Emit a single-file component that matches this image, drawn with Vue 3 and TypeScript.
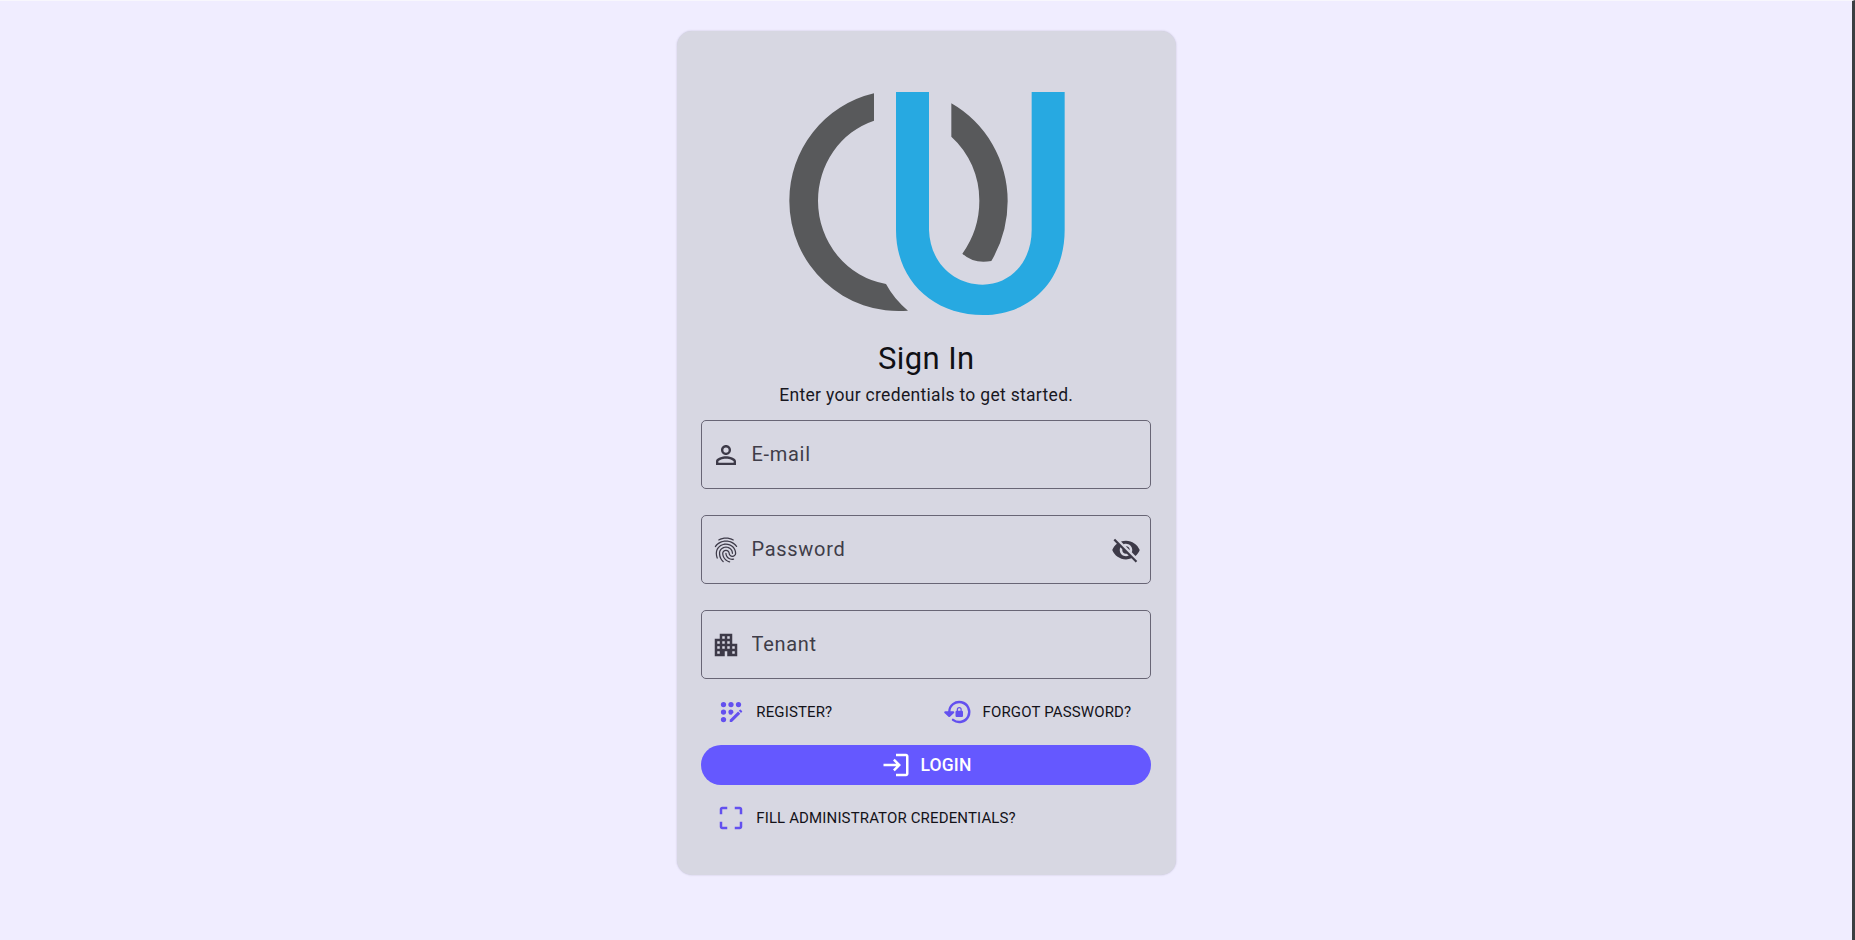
<script setup lang="ts">
import { ref } from 'vue'

interface Field {
  id: string
  label: string
  icon: string
  toggle?: boolean
}

const fields: Field[] = [
  {
    id: 'email',
    label: 'E-mail',
    icon: 'M12 5.9a2.1 2.1 0 1 1 0 4.2 2.1 2.1 0 0 1 0-4.2m0 9c2.97 0 6.1 1.46 6.1 2.1v1.1H5.9V17c0-.64 3.13-2.1 6.1-2.1M12 4C9.79 4 8 5.79 8 8s1.79 4 4 4 4-1.79 4-4-1.79-4-4-4zm0 9c-2.67 0-8 1.34-8 4v3h16v-3c0-2.66-5.33-4-8-4z',
  },
  {
    id: 'password',
    label: 'Password',
    toggle: true,
    icon: 'M17.81 4.47c-.08 0-.16-.02-.23-.06C15.66 3.42 14 3 12.01 3c-1.98 0-3.86.47-5.57 1.41-.24.13-.54.04-.68-.2-.13-.24-.04-.55.2-.68C7.82 2.52 9.86 2 12.01 2c2.13 0 3.99.47 6.03 1.52.25.13.34.43.21.67-.09.18-.26.28-.44.28zM3.5 9.72c-.1 0-.2-.03-.29-.09-.23-.16-.28-.47-.12-.7.99-1.4 2.25-2.5 3.75-3.27C9.98 4.04 14 4.03 17.15 5.65c1.5.77 2.76 1.86 3.75 3.25.16.22.11.54-.12.7-.23.16-.54.11-.7-.12-.9-1.26-2.04-2.25-3.39-2.94-2.87-1.47-6.54-1.47-9.4.01-1.36.7-2.5 1.7-3.4 2.96-.08.14-.23.21-.39.21zm6.25 12.07c-.13 0-.26-.05-.35-.15-.87-.87-1.34-1.43-2.01-2.64-.69-1.23-1.05-2.73-1.05-4.34 0-2.97 2.54-5.39 5.66-5.39s5.66 2.42 5.66 5.39c0 .28-.22.5-.5.5s-.5-.22-.5-.5c0-2.42-2.09-4.39-4.66-4.39-2.57 0-4.66 1.97-4.66 4.39 0 1.44.32 2.77.93 3.85.64 1.15 1.08 1.64 1.85 2.42.19.2.19.51 0 .71-.11.1-.24.15-.37.15zm7.17-1.85c-1.19 0-2.24-.3-3.1-.89-1.49-1.01-2.38-2.65-2.38-4.39 0-.28.22-.5.5-.5s.5.22.5.5c0 1.41.72 2.74 1.94 3.56.71.48 1.54.71 2.54.71.24 0 .64-.03 1.04-.1.27-.05.53.13.58.41.05.27-.13.53-.41.58-.57.11-1.07.12-1.21.12zM14.91 22c-.04 0-.09-.01-.13-.02-1.59-.44-2.63-1.03-3.72-2.1-1.4-1.39-2.17-3.24-2.17-5.22 0-1.62 1.38-2.94 3.08-2.94 1.7 0 3.08 1.32 3.08 2.94 0 1.07.93 1.94 2.08 1.94s2.08-.87 2.08-1.94c0-3.77-3.25-6.83-7.25-6.83-2.84 0-5.44 1.58-6.61 4.03-.39.81-.59 1.76-.59 2.8 0 .78.07 2.01.67 3.61.1.26-.03.55-.29.64-.26.1-.55-.04-.64-.29-.49-1.31-.73-2.61-.73-3.96 0-1.2.23-2.29.68-3.24 1.33-2.79 4.28-4.6 7.51-4.6 4.55 0 8.25 3.51 8.25 7.83 0 1.62-1.38 2.94-3.08 2.94s-3.08-1.32-3.08-2.94c0-1.07-.93-1.94-2.08-1.94s-2.08.87-2.08 1.94c0 1.71.66 3.31 1.87 4.51.95.94 1.86 1.46 3.27 1.85.27.07.42.35.35.61-.05.23-.26.38-.47.38z',
  },
  {
    id: 'tenant',
    label: 'Tenant',
    icon: 'M17 11V3H7v4H3v14h8v-4h2v4h8V11h-4zM7 19H5v-2h2v2zm0-4H5v-2h2v2zm0-4H5V9h2v2zm4 4H9v-2h2v2zm0-4H9V9h2v2zm0-4H9V5h2v2zm4 8h-2v-2h2v2zm0-4h-2V9h2v2zm0-4h-2V5h2v2zm4 12h-2v-2h2v2zm0-4h-2v-2h2v2z',
  },
]

const values = ref<Record<string, string>>({ email: '', password: '', tenant: '' })
const hidden = ref(true)
</script>

<template>
  <main class="page">
    <form class="card" @submit.prevent>
      <svg class="logo" viewBox="48 60 840 690" aria-label="CU">
        <g fill="#58595b">
          <path d="M312 70A328 330 0 0 0 58 393A328 330 0 0 0 414 722Q372 687 348 642A242 253 0 0 1 144 393A242 253 0 0 1 312 152Z" />
          <path d="M544 100A330 336 0 0 1 713 393Q713 490 664 573Q612 583 577 551Q628 480 628 393A242 253 0 0 0 544 200Z" />
        </g>
        <path fill="#27a9e1" d="M378 66H477V480C480 578 552 644 638 644C722 644 785 575 785 480V66H884V480C884 635 778 735 640 735C487 735 378 630 378 480Z" />
      </svg>
      <h1>Sign In</h1>
      <p class="subtitle">Enter your credentials to get started.</p>

      <div class="fields">
        <label v-for="f in fields" :key="f.id" class="field">
          <svg class="icon" viewBox="0 0 24 24"><path :d="f.icon" /></svg>
          <input v-model="values[f.id]" :type="f.toggle && hidden ? 'password' : 'text'" :placeholder="f.label" />
          <svg v-if="f.toggle" class="icon eye" viewBox="0 0 24 24" @click.prevent="hidden = !hidden">
            <path d="M12 7c2.76 0 5 2.24 5 5 0 .65-.13 1.26-.36 1.83l2.92 2.92c1.51-1.26 2.7-2.89 3.43-4.75-1.73-4.39-6-7.5-11-7.5-1.4 0-2.74.25-3.98.7l2.16 2.16C10.74 7.13 11.35 7 12 7zM2 4.27l2.28 2.28.46.46C3.08 8.3 1.78 10.02 1 12c1.73 4.39 6 7.5 11 7.5 1.55 0 3.03-.3 4.38-.84l.42.42L19.73 22 21 20.73 3.27 3 2 4.27zM7.53 9.8l1.55 1.55c-.05.21-.08.43-.08.65 0 1.66 1.34 3 3 3 .22 0 .44-.03.65-.08l1.55 1.55c-.67.33-1.41.53-2.2.53-2.76 0-5-2.24-5-5 0-.79.2-1.53.53-2.2zm4.31-.78l3.15 3.15.02-.16c0-1.66-1.34-3-3-3l-.17.01z" />
          </svg>
        </label>
      </div>

      <div class="links">
        <button type="button" class="link">
          <svg class="icon" viewBox="0 0 24 24">
            <circle cx="6" cy="6" r="2.1" /><circle cx="12" cy="6" r="2.1" /><circle cx="18" cy="6" r="2.1" />
            <circle cx="6" cy="12" r="2.1" /><circle cx="6" cy="18" r="2.1" />
            <path d="M14 12.42V12a2.05 2.05 0 1 0-2 2.1h.42zM20.88 11.29l-1.17-1.17c-.16-.16-.42-.16-.58 0l-.88.88L20 12.75l.88-.88c.16-.16.16-.42 0-.58zM11 18.25V20h1.75l6.67-6.67-1.75-1.75z" />
          </svg>
          <span>REGISTER?</span>
        </button>
        <button type="button" class="link">
          <svg class="icon" viewBox="0 0 24 24">
            <path class="ring" d="M5 13V12A8 8 0 1 1 8 18.25" />
            <path d="M1.8 11.3H8.2c.8 0 1.1.9.6 1.4l-3.2 3.1c-.3.3-.9.3-1.2 0l-3.2-3.1c-.5-.5-.2-1.4.6-1.4z" />
            <path d="M15 11v-1a2 2 0 0 0-4 0v1c-.55 0-1 .45-1 1v3c0 .55.45 1 1 1h4c.55 0 1-.45 1-1v-3c0-.55-.45-1-1-1zm-1 0h-2v-1a1 1 0 0 1 2 0z" />
          </svg>
          <span>FORGOT PASSWORD?</span>
        </button>
      </div>

      <button type="submit" class="login">
        <svg class="icon" viewBox="0 0 24 24">
          <path d="M11 7L9.6 8.4l2.6 2.6H2v2h10.2l-2.6 2.6L11 17l5-5-5-5zm9 12h-8v2h8c1.1 0 2-.9 2-2V5c0-1.1-.9-2-2-2h-8v2h8v14z" />
        </svg>
        <span>LOGIN</span>
      </button>

      <div class="links last">
        <button type="button" class="link">
          <svg class="icon" viewBox="0 0 24 24">
            <path d="M3 5v4h2V5h4V3H5c-1.1 0-2 .9-2 2zm2 10H3v4c0 1.1.9 2 2 2h4v-2H5v-4zm14 4h-4v2h4c1.1 0 2-.9 2-2v-4h-2v4zm0-16h-4v2h4v4h2V5c0-1.1-.9-2-2-2z" />
          </svg>
          <span>FILL ADMINISTRATOR CREDENTIALS?</span>
        </button>
      </div>
    </form>
  </main>
</template>

<style>
body {
  margin: 0;
}
</style>

<style scoped>
.page {
  box-sizing: border-box;
  display: flex;
  justify-content: center;
  align-items: flex-start;
  height: 940px;
  padding: 30px 0 0;
  overflow: hidden;
  background: #f0edff;
  border-top: 1px solid #f8f7fd;
  border-right: 3px solid #3b3f42;
  font-family: Roboto, sans-serif;
}
.card {
  box-sizing: border-box;
  display: flex;
  flex-direction: column;
  width: 499px;
  height: 844px;
  padding: 59px 24.25px 0 24.75px;
  background: #d7d7e2;
  border-radius: 15px;
  box-shadow: 0 0 2px rgba(70, 60, 100, 0.28);
}
.logo {
  display: block;
  width: 280px;
  height: 230px;
  margin: 0 auto;
}
h1 {
  margin: 18px 0 0;
  font-size: 31px;
  line-height: 41px;
  font-weight: 400;
  letter-spacing: 0.4px;
  text-align: center;
  color: #101015;
}
.subtitle {
  margin: 4px 0 0;
  font-size: 17.5px;
  line-height: 25px;
  letter-spacing: 0.31px;
  text-align: center;
  color: #18171f;
}
.fields {
  display: flex;
  flex-direction: column;
  gap: 26px;
  margin-top: 12px;
}
.field {
  box-sizing: border-box;
  display: flex;
  align-items: center;
  height: 69px;
  padding: 0 9px;
  border: 1px solid #686575;
  border-radius: 5px;
}
.icon {
  flex: none;
  width: 30px;
  height: 30px;
  fill: currentColor;
  color: #3d3a48;
}
.eye {
  cursor: pointer;
}
input {
  flex: 1;
  min-width: 0;
  height: 39px;
  margin: 0 10px 1px 10.25px;
  padding: 0;
  border: 0;
  outline: 0;
  background: transparent;
  font: 400 20px Roboto, sans-serif;
  letter-spacing: 0.7px;
  color: #1c1b22;
}
input::placeholder {
  color: #3f3d49;
  opacity: 1;
}
button {
  display: flex;
  align-items: center;
  padding: 0;
  border: 0;
  background: none;
  font-family: inherit;
  cursor: pointer;
}
.links {
  display: flex;
  justify-content: space-between;
  margin-top: 13px;
  padding: 0 20px 0 15px;
}
.link {
  gap: 10px;
  height: 40px;
  font-size: 15px;
  letter-spacing: 0.14px;
  color: #131219;
}
.link .icon {
  color: #6350ef;
}
.ring {
  fill: none;
  stroke: currentColor;
  stroke-width: 1.9;
  stroke-linecap: round;
}
.login {
  justify-content: center;
  gap: 9.5px;
  height: 40px;
  margin-top: 12.5px;
  border-radius: 20px;
  background: #6558ff;
  color: #fff;
  font-size: 17.5px;
  font-weight: 500;
  letter-spacing: 0.15px;
}
.login .icon {
  color: #fff;
}
</style>
